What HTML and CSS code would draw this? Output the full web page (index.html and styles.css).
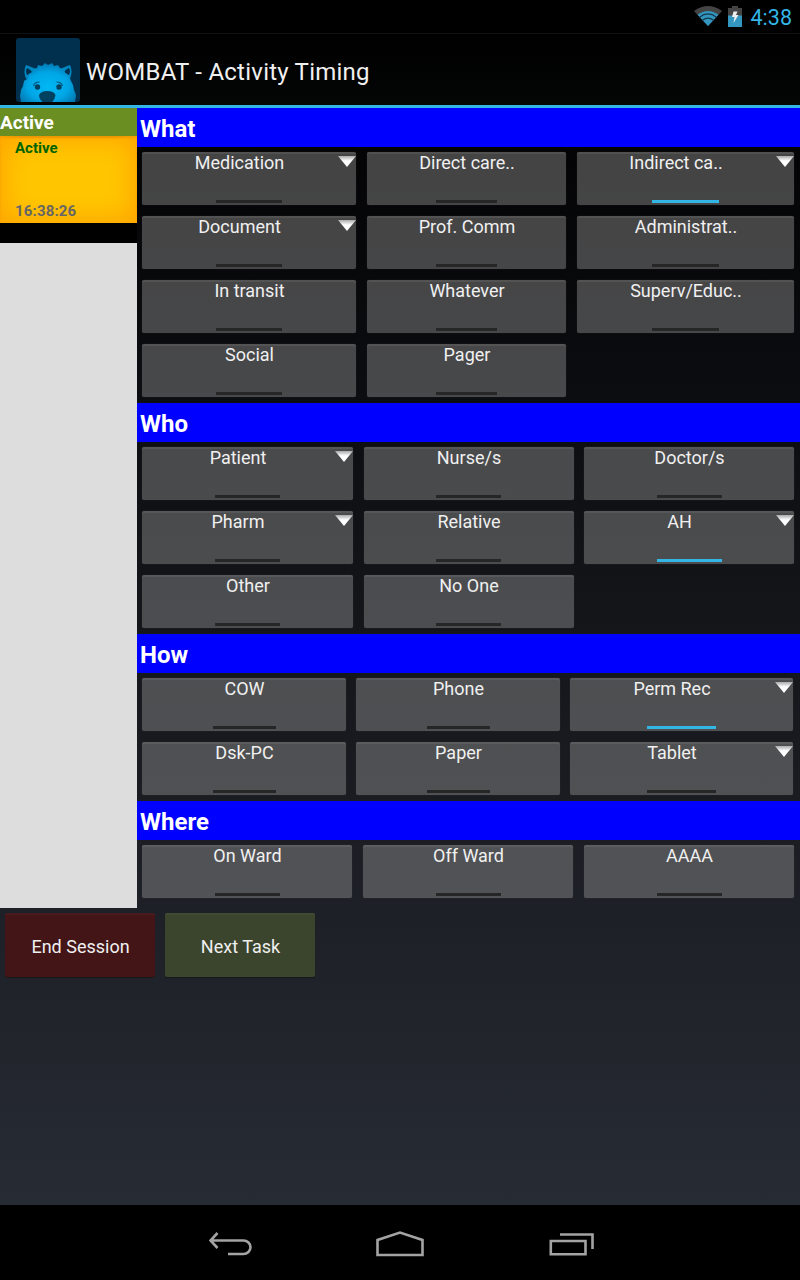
FILE: index.html
```
<!DOCTYPE html>
<html lang="en">
<head>
<meta charset="utf-8">
<title>WOMBAT - Activity Timing</title>
<link rel="stylesheet" href="styles.css">
</head>
<body>
<div class="screen">
  <div class="status">
    <svg class="wifi" width="28" height="20" viewBox="0 0 28 20"><path d="M0 5Q14-5 28 5L14 20Z" fill="#444"/><path d="M3.500 8.800Q14 1 24.500 8.800L14 20Z" fill="#3396bf"/><path d="M5.500 11.200Q14 4.500 22.500 11.200M8.500 14.300Q14 9.800 19.500 14.300" fill="none" stroke="#12384a" stroke-width="1.200"/></svg>
    <svg class="battery" width="14" height="21" viewBox="0 0 14 21"><path d="M4 0h6v2h4v8H0V2h4z" fill="#444"/><path d="M0 9.500h14V21H0z" fill="#3396bf"/><path d="M5.500 5.500h4L8 9h2.500l-5 8 1-6H4z" fill="#eee"/></svg>
    <span class="clock">4:38</span>
  </div>
  <header class="bar">
    <svg class="logo" width="64" height="64" viewBox="0 0 64 64">
      <defs><radialGradient id="fur" cx=".5" cy=".6" r=".6"><stop offset="0" stop-color="#00b8f4"/><stop offset=".6" stop-color="#00a6e6"/><stop offset="1" stop-color="#0077b0"/></radialGradient><clipPath id="tile"><rect width="64" height="64" rx="3"/></clipPath></defs>
      <g clip-path="url(#tile)">
        <rect width="64" height="64" fill="#01304f"/>
        <path d="M10 41Q7 33 10 27Q17 29 22 33ZM54 41Q57 33 54 27Q47 29 42 33Z" fill="#0087c0"/>
        <path d="M11 37Q9 33 11 30Q14 31 16 34ZM53 37Q55 33 53 30Q50 31 48 34Z" fill="#01304f"/>
        <path d="M5 64L4 58L5 52L7 48L8 43L11 41L13 37L17 34L17 31L21 30L22 27L26 28L29 25L32 27L36 25L38 28L42 27L44 30L48 31L49 35L53 38L55 43L57 47L58 52L60 57L59 64Z" fill="url(#fur)"/>
        <circle cx="21.500" cy="49" r="2.700" fill="#01405f"/><circle cx="43" cy="49" r="2.700" fill="#01405f"/>
        <path d="M17.500 48q1-4 6-4M46.500 48q-1-4-6-4" fill="none" stroke="#01567c" stroke-width="1.200"/>
        <path d="M23 57Q25 53 31 53Q38 53 39.500 57Q39 62 35 65H28Q23 62 23 57Z" fill="#01405f"/>
      </g>
    </svg>
    <h1 class="title">WOMBAT - Activity Timing</h1>
  </header>
  <div class="main">
    <aside class="side">
      <h2 class="side-head">Active</h2>
      <div class="task"><span class="task-name">Active</span><span class="task-time">16:38:26</span></div>
      <div class="gap"></div>
    </aside>
    <div class="groups">
      <section><h2 class="head">What</h2><div class="grid what">
        <div class="key menu">Medication</div><div class="key">Direct care..</div><div class="key menu on">Indirect ca..</div>
        <div class="key menu">Document</div><div class="key">Prof. Comm</div><div class="key">Administrat..</div>
        <div class="key">In transit</div><div class="key">Whatever</div><div class="key">Superv/Educ..</div>
        <div class="key">Social</div><div class="key">Pager</div></div></section>
      <section><h2 class="head">Who</h2><div class="grid who">
        <div class="key menu">Patient</div><div class="key">Nurse/s</div><div class="key">Doctor/s</div>
        <div class="key menu">Pharm</div><div class="key">Relative</div><div class="key menu on">AH</div>
        <div class="key">Other</div><div class="key">No One</div></div></section>
      <section><h2 class="head">How</h2><div class="grid how">
        <div class="key">COW</div><div class="key">Phone</div><div class="key menu on">Perm Rec</div>
        <div class="key">Dsk-PC</div><div class="key">Paper</div><div class="key menu">Tablet</div></div></section>
      <section><h2 class="head">Where</h2><div class="grid where">
        <div class="key">On Ward</div><div class="key">Off Ward</div><div class="key">AAAA</div></div></section>
    </div>
  </div>
  <div class="actions"><div class="action end">End Session</div><div class="action next">Next Task</div></div>
  <nav class="nav">
    <svg width="44" height="24" viewBox="0 0 44 24"><path d="M8.500 1L1.500 8.500L8.500 16M2 8.500H34.500a7 6.750 0 0 1 0 13.500H19" fill="none" stroke="#a3a3a3" stroke-width="2.600"/></svg>
    <svg width="48" height="26" viewBox="0 0 48 26"><path d="M1.500 24V9L24 1.500L46.500 9V24Z" fill="none" stroke="#a3a3a3" stroke-width="2.600"/></svg>
    <svg width="46" height="24" viewBox="0 0 46 24"><path d="M1.800 9H36.500V22.300H1.800ZM11 2.500H43.500V17" fill="none" stroke="#a3a3a3" stroke-width="2.600"/></svg>
  </nav>
</div>
</body>
</html>
```
FILE: styles.css
```
body { margin: 0; }
* { box-sizing: border-box; }
h1, h2 { margin: 0; }
.screen { width: 800px; height: 1280px; display: flex; flex-direction: column; overflow: hidden; background: linear-gradient(#000 0, #020203 100px, #272b33 1205px); font-family: Roboto, sans-serif; color: #f0f0f0; }
.status { height: 33px; flex: none; background: #000; display: flex; justify-content: flex-end; padding: 6px 8px 0 0; }
.wifi { margin-right: 6px; }
.battery { margin-right: 9px; }
.clock { color: #33b5e5; font-size: 21.5px; line-height: 24px; }
.bar { height: 75px; flex: none; background: linear-gradient(#000, #040505); border-top: 1px solid #111; border-bottom: 3px solid #33b5e5; display: flex; align-items: flex-start; padding: 4px 0 0 16px; }
.logo { margin-right: 6px; }
.title { font-size: 24px; font-weight: 400; line-height: 28px; letter-spacing: .24px; margin-top: 20px; }
.main { display: flex; height: 800px; flex: none; }
.side { width: 137px; background: #ddd; }
.side-head { height: 28px; background: #6b8e23; color: #fff; font-size: 19px; line-height: 29px; }
.task { height: 87px; display: flex; flex-direction: column; justify-content: space-between; padding: 4px 15px 3px; font-size: 15px; font-weight: 700; line-height: 17px; background: #ffc600; box-shadow: inset 0 0 26px 5px #ffa500, inset 0 2px 2px #c87c00; }
.task-name { color: #006400; }
.task-time { color: #666; letter-spacing: .15px; }
.gap { height: 20px; background: #000; }
.groups { flex: 1; }
.head { height: 39px; background: #00f; color: #fff; font-size: 24px; line-height: 43px; padding-left: 3px; }
.grid { display: grid; grid-auto-rows: 53px; row-gap: 11px; padding: 5px; }
.what { grid-template-columns: 214px 199px 217px; column-gap: 11px; height: 256px; }
.who { grid-template-columns: 211px 210px 210px; column-gap: 10.500px; height: 192px; }
.how { grid-template-columns: 204px 204px 223px; column-gap: 10px; height: 128px; }
.where { grid-template-columns: 210px 210px 210px; column-gap: 11px; height: 64px; }
.key { position: relative; border-radius: 2px; padding-left: 1px; background: rgba(143, 143, 143, .46); box-shadow: inset 0 2px 0 rgba(255, 255, 255, .07), 0 0 1px rgba(143, 143, 143, .4); font-size: 18px; line-height: 21px; text-align: center; white-space: nowrap; }
.key::after { content: ""; position: absolute; left: 34.700%; width: 30.800%; bottom: 2.500px; height: 3px; background: #262626; }
.key.on::after { background: #33b5e5; }
.menu { padding-right: 20px; }
.menu::before { content: ""; position: absolute; right: 0; top: 4px; width: 18px; height: 11px; background: linear-gradient(#aaa, #fff 45%); clip-path: polygon(0 0, 100% 0, 50% 100%); }
.actions { height: 297px; flex: none; display: flex; gap: 10px; padding: 5px; }
.action { width: 150px; height: 64px; border-radius: 2px; padding-left: 1px; font-size: 18px; line-height: 67px; text-align: center; box-shadow: inset 0 2px rgba(255, 255, 255, .03), 0 1px 1px rgba(0, 0, 0, .3); }
.end { background: #431517; }
.next { background: #3b452d; }
.nav { flex: 1; background: #000; display: flex; align-items: flex-start; padding: 26px 0 0 208px; gap: 124px; }
.nav svg:nth-child(odd) { margin: 1px -1px 0 1px; }
```
